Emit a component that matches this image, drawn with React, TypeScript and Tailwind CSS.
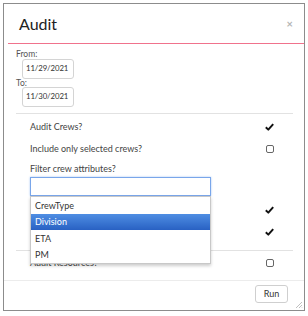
import React from "react";

const Check = () => (
  <svg width="9" height="8" viewBox="0 0 9 8" className="block">
    <path d="M0.8 4.2 L3.3 6.6 L8.2 1.2" fill="none" stroke="#111" strokeWidth="2" strokeLinejoin="round" />
  </svg>
);

const Box = () => <div className="w-[8px] h-[8px] border border-[#666] rounded-[2px] bg-white" />;

const Row = ({ label, right }: { label: string; right: React.ReactNode }) => (
  <div className="h-[22px] flex items-center justify-between pl-[14px] pr-[19px]">
    <span className="text-[9px] text-[#444]">{label}</span>
    <div className="w-[9px] flex justify-center">{right}</div>
  </div>
);

export default function App() {
  return (
    <div className="w-[308px] h-[316px] bg-white p-[3px]" style={{ fontFamily: "Lato, 'Open Sans', sans-serif" }}>
      <div className="relative w-[302px] h-[308px] border border-[#8c8c8c] bg-white flex flex-col">
        <div className="h-[39px] flex items-center justify-between pl-[15px] pr-[11px]">
          <span className="text-[16px] text-[#222]">Audit</span>
          <span className="text-[11px] font-bold text-[#b5b5b5] leading-none">×</span>
        </div>
        <div className="ml-[4px] h-px bg-[#f0728c]" />
        <div className="pl-[12px] pr-[11px] flex flex-col">
          <div className="mt-[5px] leading-[10px] text-[8.5px] text-[#555]">From:</div>
          <div className="ml-[6px] w-[52px] h-[20px] border border-[#d4d4d4] rounded-[3px] flex items-center pl-[3px] text-[7.8px] tracking-[-0.1px] text-[#333]">11/29/2021</div>
          <div className="leading-[8px] text-[8.5px] text-[#555]">To:</div>
          <div className="ml-[6px] w-[52px] h-[20px] border border-[#d4d4d4] rounded-[3px] flex items-center pl-[3px] text-[7.8px] tracking-[-0.1px] text-[#333]">11/30/2021</div>
          <div className="mt-[6px] h-px bg-[#e2e2e2]" />
          <div className="mt-[2px]">
            <Row label="Audit Crews?" right={<Check />} />
            <Row label="Include only selected crews?" right={<Box />} />
            <div className="h-[17px] flex items-center pl-[14px]">
              <span className="text-[9px] text-[#444]">Filter crew attributes?</span>
            </div>
            <div className="relative ml-[14px] w-[181px] h-[19px] border border-[#79a6ea] shadow-[0_0_2px_#a9c8f3] bg-white">
              <div className="absolute left-[-1px] top-[18px] w-[181px] border border-[#c8c8c8] bg-white shadow-[0_2px_3px_rgba(0,0,0,0.2)] z-10 text-[9px] text-[#333]">
                <div className="h-[16.5px] flex items-center pl-[4px]">CrewType</div>
                <div className="h-[16.5px] flex items-center pl-[4px] text-white bg-linear-to-b from-[#4f8ee3] to-[#2961c3]">Division</div>
                <div className="h-[16.5px] flex items-center pl-[4px]">ETA</div>
                <div className="h-[16.5px] flex items-center pl-[4px]">PM</div>
              </div>
            </div>
            <div className="mt-[3px]">
              <Row label="" right={<Check />} />
              <Row label="" right={<Check />} />
            </div>
          </div>
          <div className="mt-[7px] h-px bg-[#e2e2e2]" />
          <div className="mt-[1px]">
            <Row label="Audit Resources?" right={<Box />} />
          </div>
        </div>
        <div className="mt-[6px] h-px bg-[#ececec]" />
        <div className="flex justify-end pr-[16px] mt-[4px]">
          <div className="w-[33px] h-[18px] border border-[#cfcfcf] rounded-[3px] flex items-center justify-center text-[9px] text-[#333]">Run</div>
        </div>
        <svg className="absolute right-[1px] bottom-[1px]" width="8" height="8" viewBox="0 0 8 8">
          <path d="M7 1 L1 7 M7 4 L4 7 M7 6.5 L6.5 7" stroke="#b0b0b0" strokeWidth="0.8" />
        </svg>
      </div>
    </div>
  );
}
